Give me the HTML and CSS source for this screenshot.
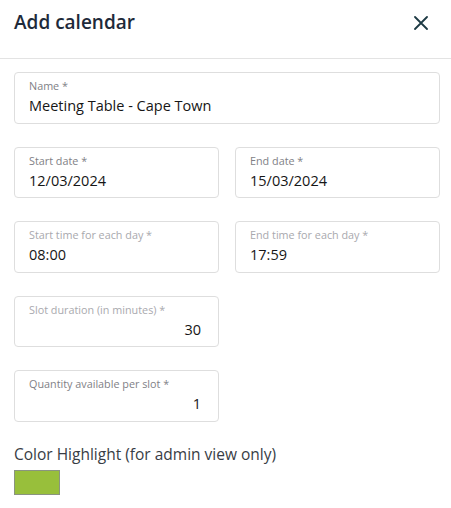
FILE: index.html
```html
<!DOCTYPE html>
<html>
<head>
<meta charset="utf-8">
<link rel="stylesheet" href="styles.css">
</head>
<body>
<div class="dialog">
  <header class="head">
    <h1 class="title">Add calendar</h1>
    <button class="close" aria-label="Close">
      <svg width="14" height="14" viewBox="0 0 14 14"><path d="M1 1L13 13M13 1L1 13" stroke="#1d3a44" stroke-width="1.8" stroke-linecap="round" fill="none"/></svg>
    </button>
  </header>
  <div class="body">
    <div class="field full">
      <span class="label">Name *</span>
      <span class="value">Meeting Table - Cape Town</span>
    </div>
    <div class="row">
      <div class="field">
        <span class="label">Start date *</span>
        <span class="value">12/03/2024</span>
      </div>
      <div class="field">
        <span class="label">End date *</span>
        <span class="value">15/03/2024</span>
      </div>
    </div>
    <div class="row">
      <div class="field">
        <span class="label light">Start time for each day *</span>
        <span class="value">08:00</span>
      </div>
      <div class="field">
        <span class="label light">End time for each day *</span>
        <span class="value">17:59</span>
      </div>
    </div>
    <div class="row">
      <div class="field">
        <span class="label light">Slot duration (in minutes) *</span>
        <span class="value num">30</span>
      </div>
    </div>
    <div class="row">
      <div class="field">
        <span class="label">Quantity available per slot *</span>
        <span class="value num">1</span>
      </div>
    </div>
    <div class="color">
      <div class="color-label">Color Highlight (for admin view only)</div>
      <div class="swatch"></div>
    </div>
  </div>
</div>
</body>
</html>
```
FILE: styles.css
```css
* { box-sizing: border-box; }
html, body { margin: 0; padding: 0; background: #fff; }
body { font-family: "Open Sans", "Noto Sans", sans-serif; color: #1a1a1a; width: 451px; }
.head {
  display: flex;
  align-items: center;
  justify-content: space-between;
  height: 59px;
  padding: 0 23px 0 14px;
  border-bottom: 1px solid #e3e3e3;
}
.title {
  margin: 0;
  font-size: 19px;
  font-weight: 600;
  color: #1e2a3a;
  line-height: 1;
  padding-bottom: 14px;
}
.close {
  border: 0;
  background: none;
  padding: 0;
  width: 14px;
  height: 14px;
  display: flex;
  margin-bottom: 12px;
}
.body {
  padding: 13px 11px 0 14px;
  display: flex;
  flex-direction: column;
  gap: 23px;
}
.row {
  display: grid;
  grid-template-columns: 205px 205px;
  column-gap: 16px;
}
.field {
  height: 51.5px;
  border: 1px solid #dedede;
  border-radius: 4px;
  padding: 5px 17px 0 14px;
  display: flex;
  flex-direction: column;
}
.label {
  font-size: 10.8px;
  line-height: 15px;
  color: #7f7f86;
}
.label.light { color: #a9a9ae; }
.value {
  font-size: 14.5px;
  line-height: 22px;
  margin-top: 2px;
  color: #161616;
}
.value.num { text-align: right; }
.color { margin-top: -1px; }
.color-label {
  font-size: 15.5px;
  line-height: 20px;
  color: #383d45;
}
.swatch {
  margin-top: 6px;
  width: 46px;
  height: 25px;
  background: #98bf3b;
  border: 1px solid #8a9480;
}
```
